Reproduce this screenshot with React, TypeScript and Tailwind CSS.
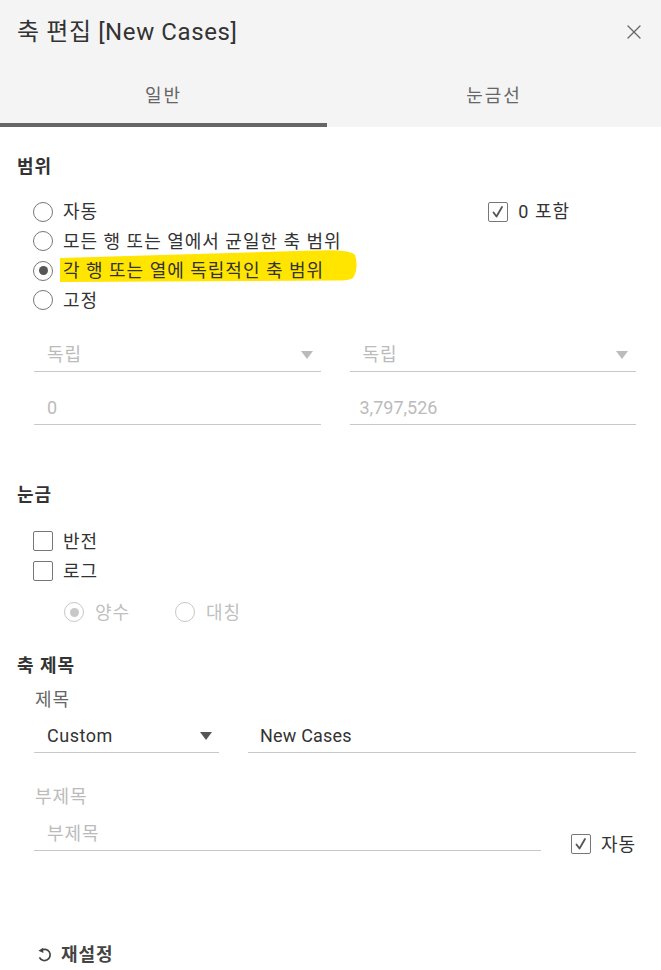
import { X } from "lucide-react";

const Radio = ({ checked, disabled }: { checked?: boolean; disabled?: boolean }) => (
  <span className={`size-[20px] shrink-0 rounded-full border flex items-center justify-center bg-white ${disabled ? "border-[#c8c8c8]" : "border-[#777]"}`}>
    {checked && <span className={`size-[9px] rounded-full ${disabled ? "bg-[#c8c8c8]" : "bg-[#555]"}`} />}
  </span>
);

const Checkbox = ({ checked }: { checked?: boolean }) => (
  <span className="size-[20px] shrink-0 rounded-[2px] border border-[#777] bg-white flex items-center justify-center">
    {checked && (
      <svg width="14" height="14" viewBox="0 0 14 14">
        <polyline points="2.5,7.5 5.5,11.5 11,2" fill="none" stroke="#555" strokeWidth="1.8" strokeLinejoin="round" strokeLinecap="round" />
      </svg>
    )}
  </span>
);

const Caret = ({ color }: { color: string }) => (
  <svg width="12" height="8" viewBox="0 0 12 8">
    <polygon points="0,0 12,0 6,8" fill={color} />
  </svg>
);

const App = () => {
  const options = ["자동", "모든 행 또는 열에서 균일한 축 범위", "각 행 또는 열에 독립적인 축 범위", "고정"];

  // main render
  return (
    <div className="w-[661px] h-[970px] bg-white text-[#333] text-[18px] tracking-[1px] font-['Roboto','Noto_Sans_CJK_KR',sans-serif] overflow-hidden">
      {/* header */}
      <div className="bg-[#f4f4f4]">
        <div className="h-[64px] px-[17px] flex items-center justify-between">
          <p className="text-[24px] tracking-[0.6px] text-[#333]">축 편집 [New Cases]</p>
          <X size={24} strokeWidth={1.3} className="text-[#666] mr-[-2px]" />
        </div>
        <div className="grid grid-cols-[327px_1fr] h-[63px] text-[#666] tracking-[2px]">
          <div className="flex items-center justify-center pt-[4px] border-b-4 border-[#666]">일반</div>
          <div className="flex items-center justify-center pt-[1px] pb-[2px]">눈금선</div>
        </div>
      </div>

      <div className="px-[17px]">
        {/* range */}
        <p className="mt-[28px] font-bold leading-[24px]">범위</p>
        <div className="mt-[18px] pl-[16px] pr-[8px] flex justify-between">
          <div className="flex flex-col">
            {options.map((o, i) => (
              <div key={o} className="relative h-[29.5px] flex items-center gap-[10px]">
                {i === 2 && (
                  <svg className="absolute left-[27px] top-[-6px]" width="298" height="33" viewBox="0 0 298 33">
                    <path d="M0 8 L255 0.5 Q291 -1 295 5 Q299 18 293 28 Q290 31 270 30.5 L0 32 Z" fill="#ffe500" />
                  </svg>
                )}
                <Radio checked={i === 2} />
                <span className="relative">{o}</span>
              </div>
            ))}
          </div>
          <div className="h-[29.5px] flex items-center gap-[10px] pr-[66px]">
            <Checkbox checked />
            <span>0 포함</span>
          </div>
        </div>

        <div className="mt-[23px] pl-[17px] pr-[8px] grid grid-cols-2 gap-x-[29px] gap-y-[19px] text-[#bbb]">
          <div className="h-[34px] border-b border-[#c8c8c8] flex items-center justify-between pl-[13px] pr-[8px]">
            <span>독립</span>
            <Caret color="#bbb" />
          </div>
          <div className="h-[34px] border-b border-[#c8c8c8] flex items-center justify-between pl-[13px] pr-[8px]">
            <span>독립</span>
            <Caret color="#bbb" />
          </div>
          <div className="h-[34px] border-b border-[#c8c8c8] flex items-center pl-[13px]">0</div>
          <div className="h-[34px] border-b border-[#c8c8c8] flex items-center pl-[10px] tracking-normal">3,797,526</div>
        </div>

        {/* ticks */}
        <p className="mt-[58px] font-bold leading-[24px]">눈금</p>
        <div className="mt-[19px] pl-[16px] flex flex-col">
          <div className="h-[30px] flex items-center gap-[10px]">
            <Checkbox />
            <span>반전</span>
          </div>
          <div className="h-[30px] flex items-center gap-[10px]">
            <Checkbox />
            <span>로그</span>
          </div>
        </div>
        <div className="mt-[11px] pl-[47px] h-[30px] flex items-center text-[#c0c0c0]">
          <div className="flex items-center gap-[11px] w-[111px]">
            <Radio checked disabled />
            <span>양수</span>
          </div>
          <div className="flex items-center gap-[11px]">
            <Radio disabled />
            <span>대칭</span>
          </div>
        </div>

        {/* axis title */}
        <p className="mt-[27px] font-bold leading-[24px]">축 제목</p>
        <p className="mt-[10px] pl-[18px] leading-[24px] text-[#666]">제목</p>
        <div className="mt-[7px] pl-[17px] pr-[8px] flex gap-[29px]">
          <div className="w-[185px] h-[34px] border-b border-[#c8c8c8] flex items-center justify-between pl-[13px] pr-[7px]">
            <span className="tracking-[0.5px]">Custom</span>
            <Caret color="#555" />
          </div>
          <div className="flex-1 h-[34px] border-b border-[#c8c8c8] flex items-center pl-[12px] tracking-[0.2px]">New Cases</div>
        </div>

        <p className="mt-[32px] pl-[18px] leading-[24px] text-[#bbb]">부제목</p>
        <div className="mt-[8px] pl-[17px] pr-[8px] flex items-end">
          <div className="flex-1 h-[34px] border-b border-[#c8c8c8] flex items-center pl-[13px] text-[#bbb]">부제목</div>
          <div className="ml-[30px] mb-[-8px] h-[30px] shrink-0 whitespace-nowrap flex items-center gap-[10px]">
            <Checkbox checked />
            <span>자동</span>
          </div>
        </div>

        {/* reset */}
        <div className="mt-[91px] pl-[20px] h-[24px] flex items-center gap-[9px] font-bold text-[#444]">
          <svg width="15" height="15" viewBox="0 0 16 16">
            <path d="M4.5 3.6 A6 6 0 1 1 2.6 11" fill="none" stroke="#444" strokeWidth="1.8" />
            <polygon points="1.5,4 6.5,0.8 6.8,6.5" fill="#444" />
          </svg>
          <span>재설정</span>
        </div>
      </div>
    </div>
  );
};

export default App;
